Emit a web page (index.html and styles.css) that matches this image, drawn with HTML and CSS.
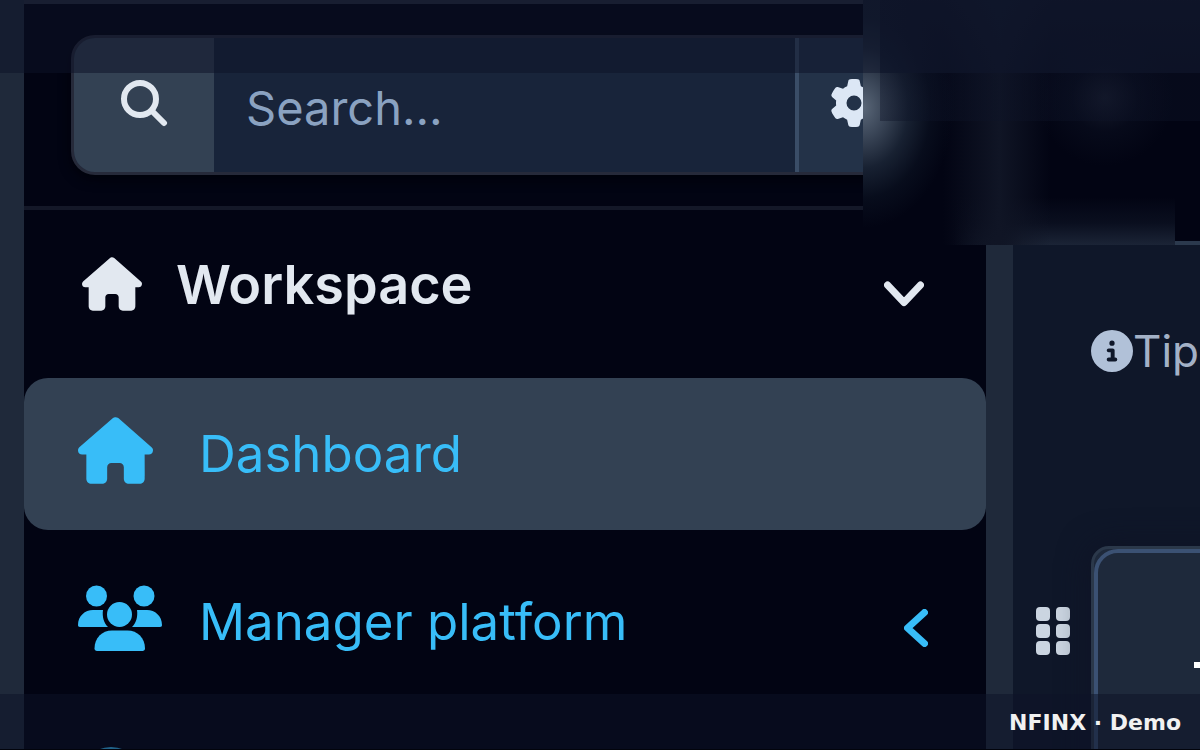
FILE: index.html
```
<!DOCTYPE html>
<html lang="en">
<head>
  <meta charset="UTF-8">
  <meta name="viewport" content="width=device-width, initial-scale=1.0">
  <title>NFINX · Demo</title>
  <link rel="stylesheet" href="styles.css">
</head>
<body>
  <svg class="defs" aria-hidden="true">
    <symbol id="house" viewBox="0 0 576 512">
      <path d="M575.8 255.5c0 18-15 32.1-32 32.1l-32 0 .7 160.2c0 2.7-.2 5.4-.5 8.1l0 16.2c0 22.1-17.9 40-40 40l-16 0c-1.1 0-2.2 0-3.3-.1c-1.4 .1-2.8 .1-4.2 .1L416 512l-24 0c-22.1 0-40-17.9-40-40l0-24 0-64c0-17.7-14.3-32-32-32l-64 0c-17.7 0-32 14.3-32 32l0 64 0 24c0 22.1-17.9 40-40 40l-24 0-31.9 0c-1.5 0-3-.1-4.5-.2c-1.2 .1-2.4 .2-3.6 .2l-16 0c-22.1 0-40-17.9-40-40l0-112c0-.9 0-1.9 .1-2.8l0-69.7-32 0c-18 0-32-14-32-32.1c0-9 3-17 10-24L266.4 8c7-7 15-8 22-8s15 2 21 7L564.8 231.5c8 7 12 15 11 24z"/>
    </symbol>
  </svg>

  <div class="layout">
    <div class="rail"></div>

    <aside class="sidebar">
      <form class="search">
        <div class="search-box">
          <label class="search-icon" for="q" aria-label="Search">
            <svg width="48" height="48" viewBox="0 0 48 48" fill="none" stroke="currentColor" stroke-width="6" stroke-linecap="round">
              <circle cx="20" cy="20" r="16"/>
              <path d="M32 32l12 12"/>
            </svg>
          </label>
          <input type="text" id="q" placeholder="Search…">
          <button type="button" class="settings" aria-label="Settings">
            <svg width="48" height="48" viewBox="0 0 512 512" fill="currentColor">
              <path d="M495.9 166.6c3.2 8.7 .5 18.4-6.4 24.6l-43.3 39.4c1.1 8.3 1.7 16.8 1.7 25.4s-.6 17.1-1.7 25.4l43.3 39.4c6.9 6.2 9.6 15.9 6.4 24.6c-4.4 11.9-9.7 23.3-15.8 34.3l-4.7 8.1c-6.6 11-14 21.4-22.1 31.2c-5.9 7.2-15.7 9.6-24.5 6.8l-55.7-17.7c-13.4 10.3-28.2 18.9-44 25.4l-12.5 57.1c-2 9.1-9 16.3-18.2 17.8c-13.8 2.3-28 3.5-42.5 3.5s-28.7-1.2-42.5-3.5c-9.2-1.5-16.2-8.7-18.2-17.8l-12.5-57.1c-15.8-6.5-30.6-15.1-44-25.4L83.1 425.9c-8.8 2.8-18.6 .3-24.5-6.8c-8.1-9.8-15.5-20.2-22.1-31.2l-4.7-8.1c-6.1-11-11.4-22.4-15.8-34.3c-3.2-8.7-.5-18.4 6.4-24.6l43.3-39.4C64.6 273.1 64 264.6 64 256s.6-17.1 1.7-25.4L22.4 191.2c-6.9-6.2-9.6-15.9-6.4-24.6c4.4-11.9 9.7-23.3 15.8-34.3l4.7-8.1c6.6-11 14-21.4 22.1-31.2c5.9-7.2 15.7-9.6 24.5-6.8l55.7 17.7c13.4-10.3 28.2-18.9 44-25.4l12.5-57.1c2-9.1 9-16.3 18.2-17.8C227.3 1.2 241.5 0 256 0s28.7 1.2 42.5 3.5c9.2 1.5 16.2 8.7 18.2 17.8l12.5 57.1c15.8 6.5 30.6 15.1 44 25.4l55.7-17.7c8.8-2.8 18.6-.3 24.5 6.8c8.1 9.8 15.5 20.2 22.1 31.2l4.7 8.1c6.1 11 11.4 22.4 15.8 34.3zM256 336a80 80 0 1 0 0-160 80 80 0 1 0 0 160z"/>
            </svg>
          </button>
        </div>
      </form>

      <nav class="menu">
        <button type="button" class="menu-title">
          <svg width="60" height="54" fill="currentColor"><use href="#house"/></svg>
          <span>Workspace</span>
          <svg class="chevron" width="40" height="26" viewBox="0 0 40 26" fill="none" stroke="currentColor" stroke-width="7" stroke-linecap="round" stroke-linejoin="round">
            <path d="M3.500 4l16.500 17.500L36.500 4"/>
          </svg>
        </button>
        <a href="#dashboard" class="item active">
          <span class="icon"><svg width="75" height="67" fill="currentColor"><use href="#house"/></svg></span>
          <span>Dashboard</span>
        </a>
        <a href="#manager" class="item">
          <span class="icon">
            <svg width="84" height="67" viewBox="0 0 84 67" fill="currentColor">
              <circle cx="18.500" cy="11" r="10.500"/>
              <circle cx="66" cy="11" r="10.500"/>
              <circle cx="41.500" cy="29.500" r="12.500"/>
              <path d="M2 42c-1.500 0-2-1-2-2 0-9 7-15 15-15h10c-1 7 1 13 5 17z"/>
              <path d="M82 42c1.500 0 2-1 2-2 0-9-7-15-15-15H59c1 7-1 13-5 17z"/>
              <path d="M19 66c-1.500 0-2.500-1-2.500-2.500C16.500 53 24 45.500 34 45.500h15.500c10 0 17.500 7.500 17.500 18 0 1.500-1 2.500-2.500 2.500z"/>
            </svg>
          </span>
          <span>Manager platform</span>
          <svg class="chevron" width="24" height="38" viewBox="0 0 24 38" fill="none" stroke="currentColor" stroke-width="7" stroke-linecap="round" stroke-linejoin="round">
            <path d="M20.500 3.500L3.500 19l17 15.500"/>
          </svg>
        </a>
        <a href="#account" class="item" aria-label="Account">
          <span class="icon"><svg width="66" height="78" viewBox="0 0 66 78" fill="currentColor"><circle cx="33" cy="33" r="33"/></svg></span>
        </a>
      </nav>
    </aside>

    <div class="rail divider"></div>

    <main class="content">
      <header class="topbar"></header>
      <p class="tip">
        <svg width="42" height="42" viewBox="0 0 512 512" fill="currentColor">
          <path d="M256 512A256 256 0 1 0 256 0a256 256 0 1 0 0 512zM216 336l24 0 0-64-24 0c-13.300 0-24-10.700-24-24s10.700-24 24-24l48 0c13.300 0 24 10.700 24 24l0 88 8 0c13.300 0 24 10.700 24 24s-10.700 24-24 24l-80 0c-13.300 0-24-10.700-24-24s10.700-24 24-24zm40-208a32 32 0 1 1 0 64 32 32 0 1 1 0-64z"/>
        </svg>
        <span>Tip</span>
      </p>
      <div class="widget-row">
        <svg class="grip" width="34" height="48" viewBox="0 0 34 48" fill="currentColor">
          <rect x="0" y="0" width="14" height="14" rx="4"/>
          <rect x="20" y="0" width="14" height="14" rx="4"/>
          <rect x="0" y="17" width="14" height="14" rx="4"/>
          <rect x="20" y="17" width="14" height="14" rx="4"/>
          <rect x="0" y="34" width="14" height="14" rx="4"/>
          <rect x="20" y="34" width="14" height="14" rx="4"/>
        </svg>
        <section class="card">
          <div class="card-body">
            <svg width="32" height="6" fill="currentColor"><rect width="32" height="6"/></svg>
          </div>
        </section>
      </div>
    </main>
  </div>

  <!-- frosted patch over the top corner -->
  <div class="frost"></div>
  <div class="shade shade-strip"></div>
  <div class="shade shade-top"></div>
  <footer class="shade caption">NFINX · Demo</footer>
</body>
</html>
```

FILE: styles.css
```
* { box-sizing: border-box; }
body { margin: 0; height: 100vh; overflow: hidden; position: relative; background: #020413; color: #e2e8f0; font-family: Inter, sans-serif; }
button, input { font: inherit; color: inherit; border: 0; background: none; padding: 0; margin: 0; }
svg { display: block; flex: none; }
.defs { position: absolute; width: 0; height: 0; }

.layout { display: flex; height: 100%; overflow: hidden; }
.rail { flex: 0 0 24px; background: #1f293a; }
.divider { flex-basis: 27px; }

/* sidebar */
.sidebar { flex: 1; min-width: 0; border-top: 4px solid #252b3d; }
.search { padding: 31px 74px 31px 47px; border-bottom: 4px solid #141828; }
.search-box { display: flex; height: 140px; border: 3px solid #262a3a; border-radius: 24px; overflow: hidden; background: #18243a; box-shadow: 0 4px 12px #01020a; }
.search-icon { flex: 0 0 140px; display: flex; justify-content: center; padding-top: 41px; background: #334153; }
.search input { flex: 1; min-width: 0; padding: 4px 32px 0; font-size: 47px; outline: none; }
.search input::placeholder { color: #8aa2c1; opacity: 1; }
.settings { flex: 0 0 114px; display: flex; justify-content: center; padding-top: 41px; border-left: 4px solid #3a4d67; background: #233248; color: #dce7f5; }

.menu { display: flex; flex-direction: column; gap: 16px; }
.menu-title { display: flex; align-items: center; height: 152px; padding: 0 62px 4px 58px; gap: 34px; font-size: 54px; font-weight: 600; text-align: left; }
.chevron { margin-left: auto; }
.menu-title .chevron { margin-top: 20px; }
.item { display: flex; align-items: center; height: 152px; padding: 0 58px 8px 54px; border-radius: 24px; color: #38bdf8; font-size: 51px; text-decoration: none; }
.item span { padding-top: 6px; }
.item .icon { flex: 0 0 121px; padding-top: 0; }
.item .chevron { margin-top: 20px; }
.item.active { background: #334153; }

/* main column */
.content { flex: 0 0 187px; overflow: hidden; background: #0f1729; }
.topbar { height: 245px; background: #020413; border-bottom: 4px solid #2b394d; }
.tip { display: flex; align-items: center; gap: 0; margin: 0; padding: 78px 0 0 78px; height: 134px; color: #b1c1d8; font-size: 44px; }
.tip span { color: #a3b1c6; }
.widget-row { display: flex; align-items: flex-start; margin-top: 167px; padding-left: 23px; }
.grip { margin-top: 61px; color: #cbd5e1; }
.card { flex: 0 0 400px; height: 320px; margin-left: 21px; border: 3px solid #2b384a; border-radius: 18px; background: #1e293b; box-shadow: 0 0 32px #0f1325; }
.card-body { height: 100%; padding: 109px 96px; border: 4px solid #3b5173; border-radius: 24px; color: #fff; }

/* overlays */
.frost {
  position: absolute; top: 0; right: 25px; width: 312px; height: 245px;
  background:
    radial-gradient(ellipse 90px 120px at 0 108px, #5a6778, #455264e0 22%, #26344699 50%, #14203050 75%, #14203000),
    radial-gradient(circle 68px at 242px 98px, #151a2b, #0b102180 50%, #0b102100),
    linear-gradient(#161d30, #161d30) 0 0 / 17px 73px no-repeat,
    linear-gradient(to right, #10152500 80px, #101525 136px, #10152500 188px),
    linear-gradient(to right, #020413 90px, #02041300 160px) 0 100% / 160px 50px no-repeat,
    linear-gradient(to top, #1b2436, #10172890 22px, #10172800 48px),
    #020413;
}
.shade { position: absolute; right: 0; background: #0d132787; }
.shade-top { top: 0; left: 0; height: 73px; }
.shade-strip { top: 0; width: 320px; height: 121px; background: linear-gradient(#141c30cc, #121a2eaa 73px, #0d132766 73px); }
.caption { bottom: 0; left: 0; height: 56px; padding: 1px 19px 0 0; text-align: right; color: #f1f1f1; font: bold 22px/56px "DejaVu Sans", sans-serif; border-bottom: 1px solid #02040c; }
```
